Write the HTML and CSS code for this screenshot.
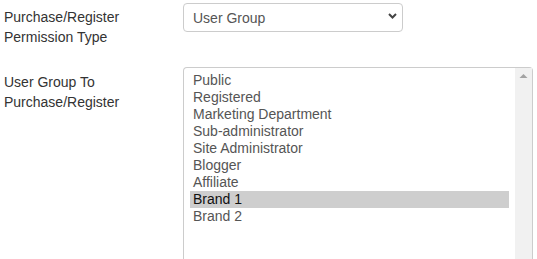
FILE: index.html
```html
<!DOCTYPE html>
<html>
<head>
  <title>Purchase/Register Permission</title>
  <link rel="stylesheet" href="styles.css">
</head>
<body>
  <div class="form">
    <div class="row">
      <label class="label">Purchase/Register Permission Type</label>
      <div class="select-wrap">
        <select class="select" name="permission_type">
          <option>User Group</option>
          <option>Access Level</option>
        </select>
        <svg class="chevron" width="9" height="6" viewBox="0 0 9 6">
          <path d="M1 1 L4.5 4.5 L8 1" fill="none" stroke="#444" stroke-width="2"/>
        </svg>
      </div>
    </div>
    <div class="row row-list">
      <label class="label">User Group To Purchase/Register</label>
      <div class="listbox">
        <div class="options">
          <div class="option">Public</div>
          <div class="option">Registered</div>
          <div class="option">Marketing Department</div>
          <div class="option">Sub-administrator</div>
          <div class="option">Site Administrator</div>
          <div class="option">Blogger</div>
          <div class="option">Affiliate</div>
          <div class="option selected">Brand 1</div>
          <div class="option">Brand 2</div>
        </div>
        <div class="scrollbar">
          <svg class="arrow" width="17" height="17" viewBox="0 0 17 17">
            <polygon points="4.5,10 8.5,6 12.5,10" fill="#a3a3a3"/>
          </svg>
        </div>
      </div>
    </div>
  </div>
</body>
</html>
```

FILE: styles.css
```css
html, body { overflow: hidden; }
body { margin: 0; background: #fff; font-family: "Liberation Sans", Arial, sans-serif; font-size: 14px; color: #333; }
.form { padding: 3px 4px 0; }
.row { display: flex; align-items: flex-start; }
.row-list { margin-top: 20px; }
.label { flex: 0 0 179px; padding-top: 4px; padding-right: 20px; box-sizing: border-box; line-height: 20px; }
.row-list .label { padding-top: 5px; }
.select-wrap { position: relative; }
.select { display: block; width: 220px; height: 29px; padding: 0 24px 0 9px; border: 1px solid #ccc; border-radius: 4px; background: #fff; color: #555; font: 14px "Liberation Sans", Arial, sans-serif; -webkit-appearance: none; appearance: none; }
.chevron { position: absolute; right: 6px; top: 10px; }
.listbox { display: flex; width: 350px; height: 192px; border: 1px solid #ccc; border-bottom: 0; border-radius: 4px 4px 0 0; box-sizing: border-box; background: #fff; }
.options { flex: 1; padding: 4px 6px; color: #555; }
.option { height: 17px; line-height: 16px; padding: 0 3px 1px; box-sizing: border-box; white-space: nowrap; }
.option.selected { background: #cecece; color: #111; }
.scrollbar { width: 17px; background: #f1f1f1; }
.arrow { display: block; }
```
